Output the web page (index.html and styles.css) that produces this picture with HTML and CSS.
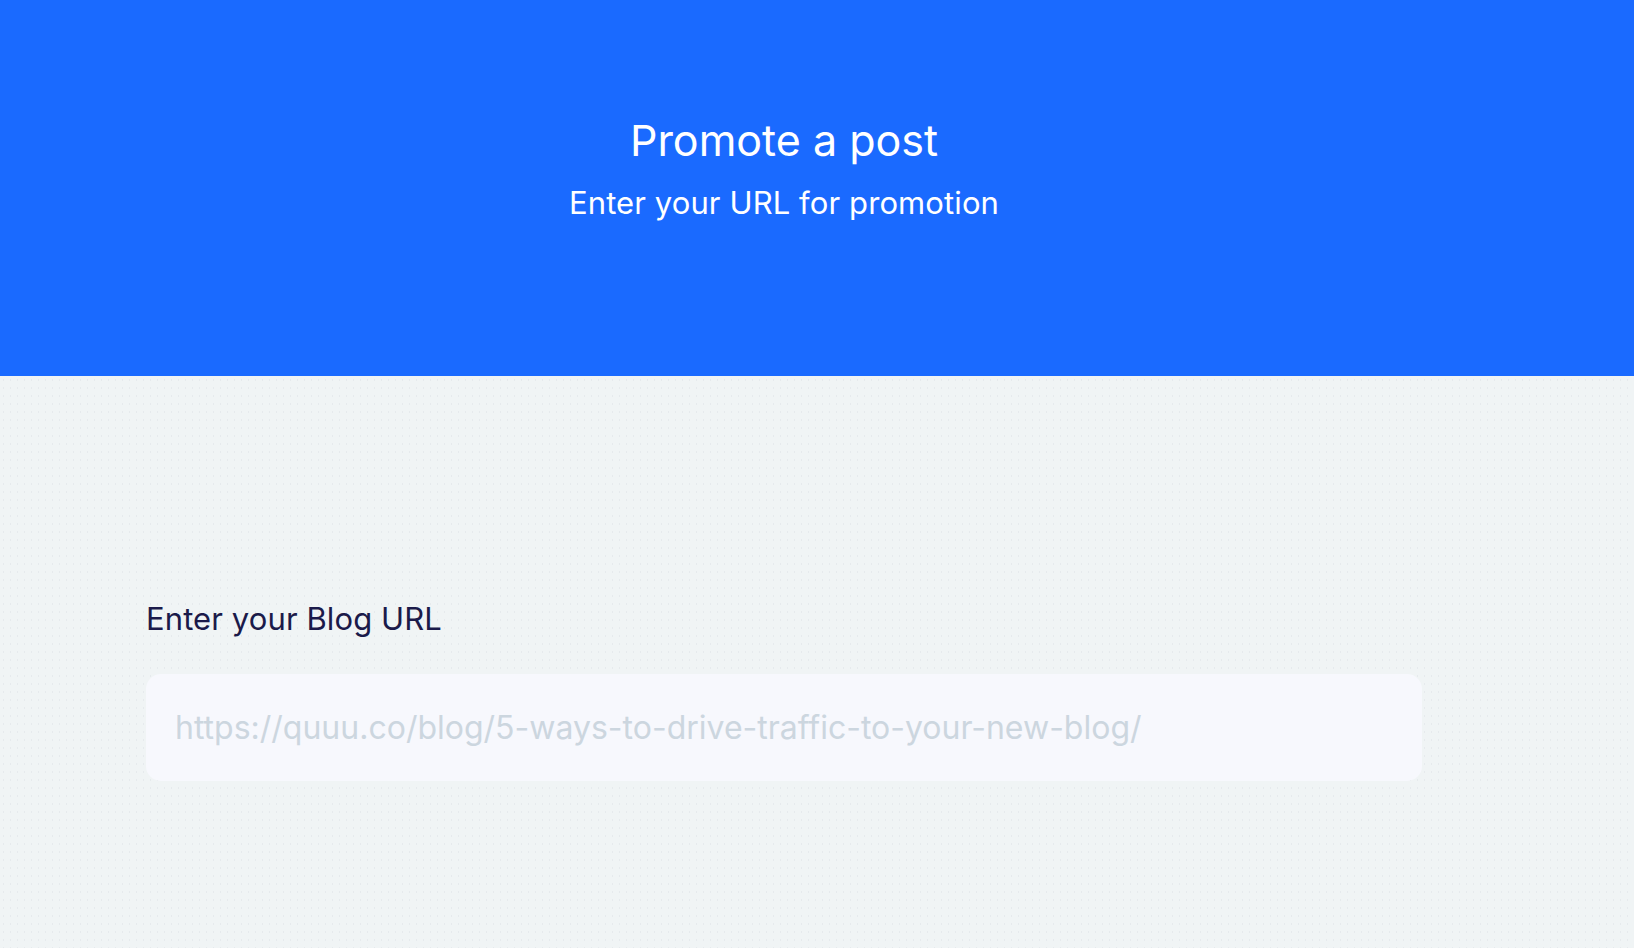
FILE: index.html
```html
<!DOCTYPE html>
<html>
<head>
  <title>Promote a post</title>
  <meta name="viewport" content="width=device-width, initial-scale=1.0">
  <link rel="stylesheet" href="styles.css">
</head>
<body>

  <header class="hero">
    <div class="wrap">
      <h1 class="hero-title">Promote a post</h1>
      <p class="hero-sub">Enter your URL for promotion</p>
    </div>
  </header>

  <main class="content">
    <div class="wrap">
      <form class="url-form">
        <label class="field-label" for="blog-url">Enter your Blog URL</label>
        <input class="field-input" id="blog-url" type="text"
               placeholder="https://quuu.co/blog/5-ways-to-drive-traffic-to-your-new-blog/">
      </form>
    </div>
  </main>

</body>
</html>
```

FILE: styles.css
```css
html, body {
  margin: 0;
  padding: 0;
  height: 100%;
  font-family: Inter, "Noto Sans", sans-serif;
  background-color: #f0f4f5;
  background-image: radial-gradient(circle, #e6eaed 0.6px, transparent 1px);
  background-size: 7px 8px;
  overflow: hidden;
}

.wrap {
  width: 1276px;
  margin-left: 146px;
}

/* Blue top banner */
.hero {
  height: 376px;
  background: #1a6aff;
  color: #fff;
  box-sizing: border-box;
  padding-top: 112px;
  text-align: center;
}

.hero-title {
  margin: 0;
  font-size: 43px;
  font-weight: 400;
  line-height: 56px;
  letter-spacing: 0;
}

.hero-sub {
  margin: 15px 0 0;
  font-size: 31px;
  font-weight: 400;
  line-height: 40px;
  letter-spacing: 0.1px;
}

/* URL form */
.content {
  padding-top: 222px;
}

.url-form {
  display: flex;
  flex-direction: column;
}

.field-label {
  font-size: 31px;
  line-height: 42px;
  color: #1b1a4a;
  letter-spacing: 0.1px;
}

.field-input {
  margin-top: 34px;
  height: 107px;
  box-sizing: border-box;
  border: none;
  border-radius: 15px;
  background: #f7f8fd;
  padding: 0 29px;
  font-family: inherit;
  font-size: 32px;
  letter-spacing: 0;
  color: #1b1a4a;
  outline: none;
}

.field-input::placeholder {
  color: #ccd6df;
}
```
